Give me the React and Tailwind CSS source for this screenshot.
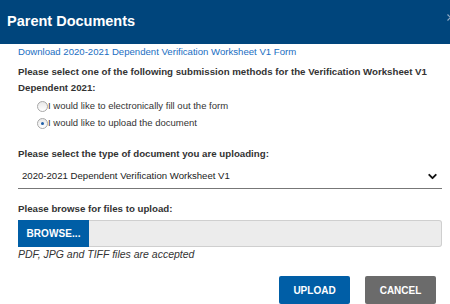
import { ChevronDown } from 'lucide-react';

function Radio({ checked }) {
  return (
    <span className="flex h-[11px] w-[11px] items-center justify-center rounded-full border border-[#a8a8a8] bg-gradient-to-b from-[#e8e8e8] to-white">
      {checked && <span className="h-[3px] w-[3px] rounded-full bg-[#1f5fa8]" />}
    </span>
  );
}

export default function App() {
  return (
    <div className="h-[304px] w-[450px] overflow-hidden bg-white font-['Liberation_Sans',Arial,sans-serif] text-[#333]">
      <div className="relative flex h-[44px] items-center bg-[#00457c] px-[7px]">
        <h1 className="text-[14.5px] font-bold text-white">Parent Documents</h1>
        {/* close button, mostly off-screen */}
        <svg className="absolute right-[-4px] top-[14px] h-[7px] w-[7px]" viewBox="0 0 7 7">
          <path d="M0.5 0.5 L6.5 6.5 M6.5 0.5 L0.5 6.5" stroke="#8fa9c4" strokeWidth="1.2" />
        </svg>
      </div>

      <div className="pl-[18px] pr-[8px]">
        <a href="#" className="mt-[1px] block text-[9.6px] leading-[13px] text-[#1a6ec2]">
          Download 2020-2021 Dependent Verification Worksheet V1 Form
        </a>

        <p className="mt-[6px] text-[9.7px] font-bold leading-[16px]">
          Please select one of the following submission methods for the Verification Worksheet V1 Dependent 2021:
        </p>

        <div className="mt-[3px] flex flex-col gap-[3px] pl-[19px] text-[9.5px]">
          <label className="flex h-[14px] items-center">
            <Radio />
            <span>I would like to electronically fill out the form</span>
          </label>
          <label className="flex h-[14px] items-center">
            <Radio checked />
            <span>I would like to upload the document</span>
          </label>
        </div>

        <p className="mt-[16px] text-[9.7px] font-bold leading-[16px]">
          Please select the type of document you are uploading:
        </p>

        <div className="mt-[2px] flex h-[25px] items-center justify-between border-b border-[#777] pl-[4px] pr-[3px] text-[9.6px] text-[#222]">
          <span>2020-2021 Dependent Verification Worksheet V1</span>
          <ChevronDown className="h-[13px] w-[13px] text-[#111]" strokeWidth={3.5} />
        </div>

        <p className="mt-[12px] text-[9.7px] font-bold leading-[16px]">Please browse for files to upload:</p>

        <div className="mt-[3px] flex h-[27px]">
          <button className="w-[71px] bg-[#005ea6] text-[10px] font-bold tracking-[0.1px] text-white">BROWSE...</button>
          <div className="flex-1 rounded-r-[3px] border border-l-0 border-[#cfcfcf] bg-[#ececec]" />
        </div>

        <p className="text-[10.5px] italic leading-[15px]">PDF, JPG and TIFF files are accepted</p>

        <div className="mt-[14px] flex justify-end gap-[15px] pr-[6px]">
          <button className="h-[28px] w-[71px] rounded-[2px] bg-[#005ea6] text-[10px] font-bold text-white">UPLOAD</button>
          <button className="h-[28px] w-[71px] rounded-[2px] bg-[#6b6b6b] text-[10px] font-bold text-white">CANCEL</button>
        </div>
      </div>
    </div>
  );
}
